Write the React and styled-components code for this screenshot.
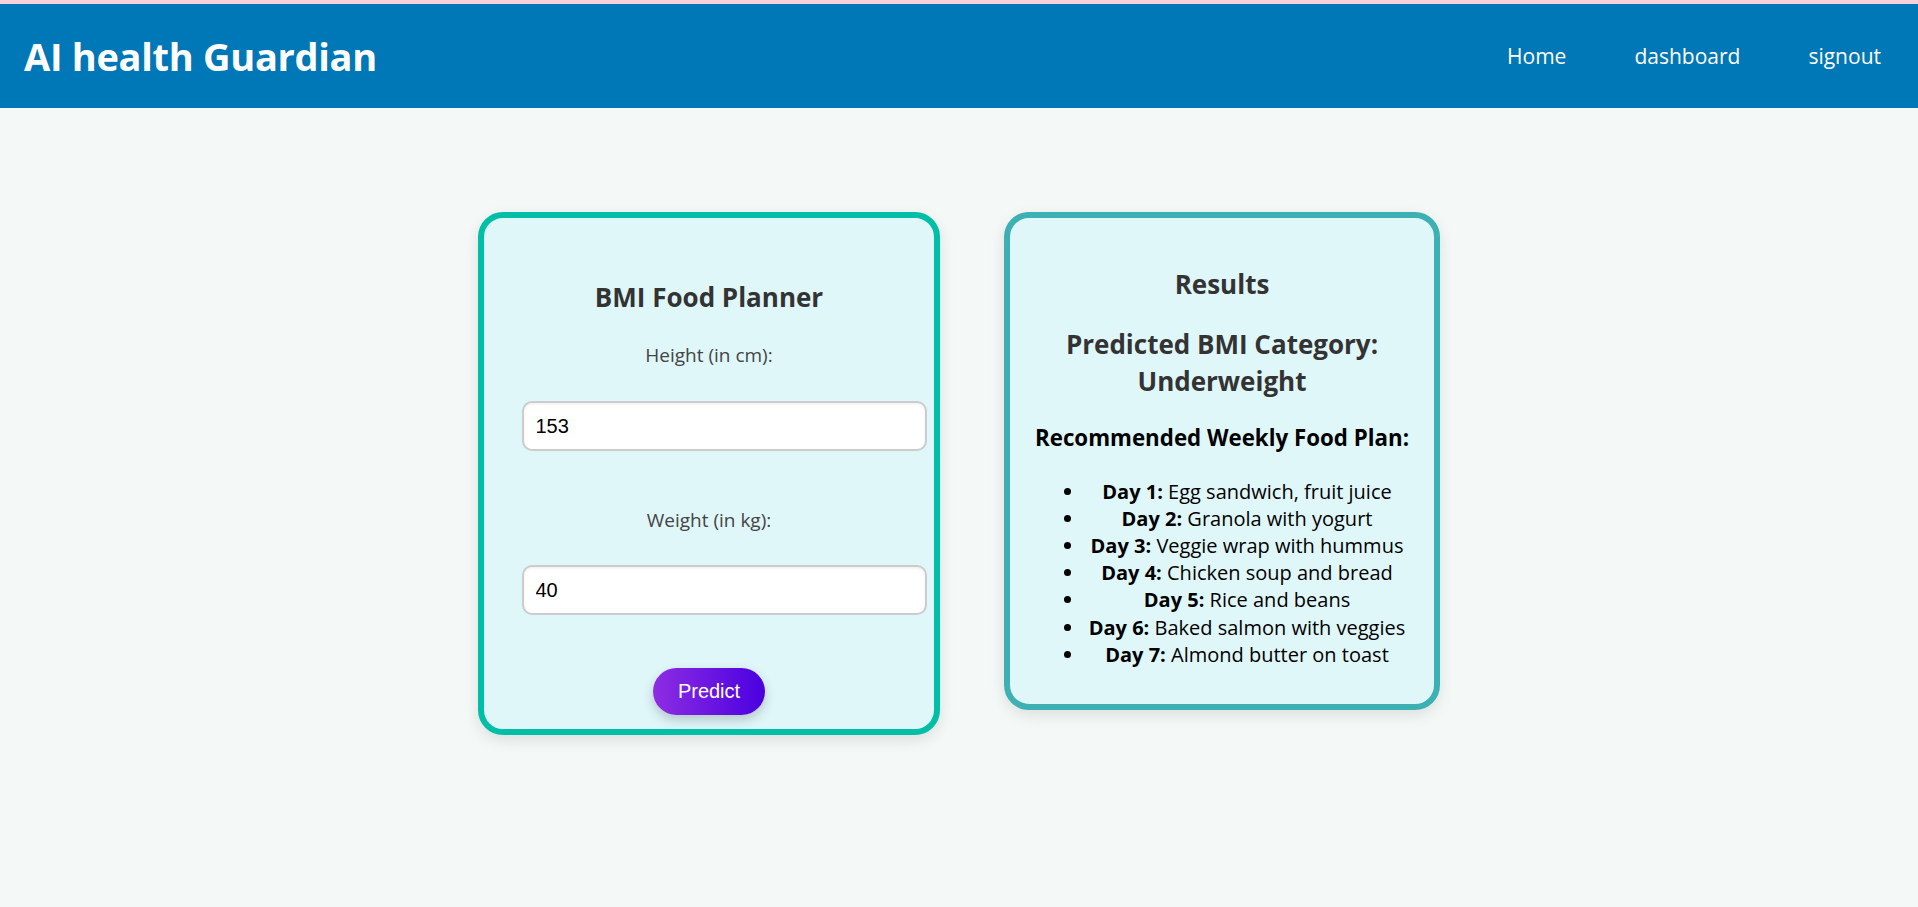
import styled, { createGlobalStyle } from "styled-components";

const GlobalStyle = createGlobalStyle`
  * {
    box-sizing: border-box;
  }
  body {
    margin: 0;
    background-color: #f4f9f8;
    font-family: "Open Sans", "Noto Sans", sans-serif;
  }
`;

const Page = styled.div`
  min-height: 907px;
  border-top: 4px solid #f8d0da;
`;

const Header = styled.header`
  display: flex;
  justify-content: space-between;
  align-items: center;
  height: 104px;
  padding: 0 37px 0 24px;
  background-color: #0077b6;
`;

const Logo = styled.h1`
  margin: 0;
  font-size: 38px;
  font-weight: 700;
  color: #ffffff;
  letter-spacing: -0.3px;
`;

const Nav = styled.nav`
  display: flex;
  align-items: center;
  gap: 68px;
`;

const NavLink = styled.a`
  font-size: 21px;
  color: #ffffff;
  text-decoration: none;
  cursor: pointer;
`;

const Main = styled.main`
  display: flex;
  justify-content: center;
  align-items: flex-start;
  gap: 64px;
  padding-top: 104px;
`;

const Card = styled.section`
  width: ${(props) => props.width}px;
  padding: ${(props) => props.padding};
  border: 6px solid ${(props) => props.border};
  border-radius: 25px;
  background-color: #e0f7fa;
  box-shadow: 0 5px 15px rgba(0, 0, 0, 0.1);
  text-align: center;
`;

const Title = styled.h2`
  margin: ${(props) => props.margin};
  font-size: 26px;
  line-height: ${(props) => props.lineHeight || "36px"};
  font-weight: 700;
  color: #333333;
`;

const Label = styled.label`
  display: block;
  margin: ${(props) => props.margin};
  font-size: 19px;
  line-height: 24px;
  color: #444444;
`;

const Input = styled.input`
  display: block;
  width: calc(100% + 30px);
  height: 50px;
  padding: 0 12px;
  border: 2.5px solid #cccccc;
  border-radius: 10px;
  background-color: #ffffff;
  box-shadow: inset 0 1px 3px rgba(0, 0, 0, 0.08);
  font-family: "Liberation Sans", Arial, sans-serif;
  font-size: 20px;
  color: #000000;
  outline: none;
`;

const PredictButton = styled.button`
  display: block;
  width: 112px;
  height: 47px;
  margin: 53px auto 0;
  border: none;
  border-radius: 24px;
  background: linear-gradient(to right, #8e2de2, #4a00e0);
  box-shadow: 0 5px 12px rgba(0, 0, 0, 0.2);
  font-family: "Liberation Sans", Arial, sans-serif;
  font-size: 20px;
  color: #ffffff;
  cursor: pointer;
`;

const PlanTitle = styled.h3`
  margin: 22.5px 0 0;
  font-size: 22.3px;
  line-height: 30px;
  font-weight: 700;
  color: #000000;
  white-space: nowrap;
`;

const PlanList = styled.ul`
  margin: 25px 0 11px;
  padding-left: 50px;
`;

const PlanItem = styled.li`
  font-size: 20px;
  line-height: 27.2px;
  color: #000000;
`;

const plan = [
  ["Day 1:", "Egg sandwich, fruit juice"],
  ["Day 2:", "Granola with yogurt"],
  ["Day 3:", "Veggie wrap with hummus"],
  ["Day 4:", "Chicken soup and bread"],
  ["Day 5:", "Rice and beans"],
  ["Day 6:", "Baked salmon with veggies"],
  ["Day 7:", "Almond butter on toast"],
];

export default function App() {
  return (
    <Page>
      <GlobalStyle />
      <Header>
        <Logo>AI health Guardian</Logo>
        <Nav>
          <NavLink>Home</NavLink>
          <NavLink>dashboard</NavLink>
          <NavLink>signout</NavLink>
        </Nav>
      </Header>
      <Main>
        <Card width={462} padding="37px 37.5px 14px" border="#00bfa6">
          <Title margin="24px 0 28px">BMI Food Planner</Title>
          <Label margin="0 0 34px">Height (in cm):</Label>
          <Input type="text" defaultValue="153" />
          <Label margin="57px 0 33px">Weight (in kg):</Label>
          <Input type="text" defaultValue="40" />
          <PredictButton>Predict</PredictButton>
        </Card>
        <Card width={436} padding="25px" border="#3db0b3">
          <Title margin="23px 0 0">Results</Title>
          <Title margin="24px 0 0" lineHeight="37px">
            Predicted BMI Category:
            <br />
            Underweight
          </Title>
          <PlanTitle>Recommended Weekly Food Plan:</PlanTitle>
          <PlanList>
            {plan.map(([day, food]) => (
              <PlanItem key={day}>
                <strong>{day}</strong> {food}
              </PlanItem>
            ))}
          </PlanList>
        </Card>
      </Main>
    </Page>
  );
}
